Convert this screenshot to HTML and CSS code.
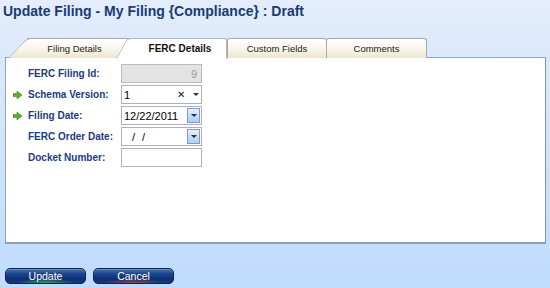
FILE: index.html
```html
<!DOCTYPE html>
<html lang="en">
<head>
    <meta charset="UTF-8">
    <title>Update Filing</title>
    <link rel="stylesheet" href="styles.css">
</head>
<body>
    <h1 class="page-title">Update Filing - My Filing {Compliance} : Draft</h1>

    <div class="tabs">
        <div class="tab tab-slant">Filing Details</div>
        <div class="tab tab-slant active">FERC Details</div>
        <div class="tab tab-custom">Custom Fields</div>
        <div class="tab tab-comments">Comments</div>
    </div>

    <div class="panel">
        <div class="form-row">
            <span class="marker"></span>
            <label class="field-label">FERC Filing Id:</label>
            <div class="field field-disabled">9</div>
        </div>
        <div class="form-row">
            <span class="marker">
                <svg width="9" height="8" viewBox="0 0 9 8"><path d="M0 2.5h4V0l5 4-5 4V5.5H0z" fill="#5cae2e" stroke="#3e8a1c" stroke-width="0.6"/></svg>
            </span>
            <label class="field-label">Schema Version:</label>
            <div class="field">
                <span class="field-value">1</span>
                <span class="clear-btn">&#x2715;</span>
                <span class="drop-arrow"></span>
            </div>
        </div>
        <div class="form-row">
            <span class="marker">
                <svg width="9" height="8" viewBox="0 0 9 8"><path d="M0 2.5h4V0l5 4-5 4V5.5H0z" fill="#5cae2e" stroke="#3e8a1c" stroke-width="0.6"/></svg>
            </span>
            <label class="field-label">Filing Date:</label>
            <div class="field">
                <span class="field-value">12/22/2011</span>
                <span class="date-btn"><span class="date-caret"></span></span>
            </div>
        </div>
        <div class="form-row">
            <span class="marker"></span>
            <label class="field-label">FERC Order Date:</label>
            <div class="field">
                <span class="field-value date-empty">/ /</span>
                <span class="date-btn"><span class="date-caret"></span></span>
            </div>
        </div>
        <div class="form-row">
            <span class="marker"></span>
            <label class="field-label">Docket Number:</label>
            <div class="field"></div>
        </div>
    </div>

    <div class="actions">
        <button class="action-btn btn-update">Update</button>
        <button class="action-btn btn-cancel">Cancel</button>
    </div>
</body>
</html>
```

FILE: styles.css
```css
* {
    margin: 0;
    padding: 0;
    box-sizing: border-box;
}

body {
    font-family: 'Liberation Sans', Arial, sans-serif;
    background: linear-gradient(180deg, #e3edfb 0%, #d3e4fc 45%, #c0dbfe 100%);
    height: 288px;
    width: 550px;
    overflow: hidden;
    padding: 0 4px 0 5px;
}

.page-title {
    font-size: 14px;
    font-weight: bold;
    color: #1b3b72;
    height: 38px;
    padding-top: 2px;
    margin-left: -2px;
    line-height: 18px;
}

/* tab strip */
.tabs {
    display: flex;
    height: 20px;
    padding-left: 22px;
    position: relative;
    z-index: 2;
}

.tab {
    position: relative;
    height: 20px;
    font-size: 9.5px;
    color: #222;
    line-height: 19px;
    text-align: center;
    background: linear-gradient(180deg, #ffffff 0%, #f6f3e8 60%, #ece6d0 100%);
    border: 1px solid #aaa99f;
    border-bottom: none;
    border-radius: 3px 3px 0 0;
}

.tab-slant {
    border-left: none;
    border-top-left-radius: 0;
}

.tab-slant::before {
    content: '';
    position: absolute;
    top: -1px;
    bottom: 0;
    left: -19px;
    width: 30px;
    background: linear-gradient(180deg, #ffffff 0%, #f6f3e8 60%, #ece6d0 100%);
    border-left: 1px solid #aaa99f;
    border-top: 1px solid #aaa99f;
    border-top-left-radius: 4px;
    transform: skewX(-44deg);
    transform-origin: bottom left;
    z-index: -1;
}

.tab-slant:first-child {
    width: 106px;
    padding-right: 10px;
    z-index: 1;
}

.tab-slant.active {
    width: 101px;
    margin-left: -7px;
    z-index: 3;
    background: #fff;
    font-size: 10px;
    font-weight: bold;
    color: #111;
    height: 21px;
    border-color: #a9b6c8;
    padding-left: 8px;
}

.tab-slant.active::before {
    background: #fff;
    border-color: #a9b6c8;
    left: -10px;
    width: 24px;
    transform: skewX(-28deg);
}

.tab-custom {
    width: 100px;
}

.tab-comments {
    width: 101px;
    margin-left: -1px;
}

/* panel */
.panel {
    height: 187px;
    width: 541px;
    background: #fff;
    border: 1px solid #8ea4c2;
    border-right-color: #7d93b4;
    border-bottom: 2px solid #8aa0c0;
    padding: 5px 0 0 6px;
    margin-top: -1px;
    position: relative;
    z-index: 1;
}

.form-row {
    display: flex;
    align-items: center;
    height: 21px;
}

.marker {
    width: 16px;
    display: flex;
    align-items: center;
    padding-left: 1px;
}

.field-label {
    width: 93px;
    white-space: nowrap;
    font-size: 10px;
    font-weight: bold;
    color: #1d3c7c;
}

.field {
    width: 81px;
    height: 19px;
    border: 1px solid #a8b1bd;
    background: #fff;
    display: flex;
    align-items: center;
    font-size: 11px;
    color: #000;
    padding-left: 2px;
}

.field-disabled {
    background: #e3e3e3;
    border-color: #b9bcc0;
    color: #9a9a9a;
    justify-content: flex-end;
    padding-right: 4px;
}

.field-value {
    flex: 1;
}

.date-empty {
    padding-left: 8px;
    letter-spacing: 2px;
}

.clear-btn {
    font-size: 10px;
    width: 14px;
    color: #222;
}

.drop-arrow {
    width: 10px;
    height: 8px;
    position: relative;
}

.drop-arrow::after {
    content: '';
    position: absolute;
    left: 2px;
    top: 2px;
    border-left: 3px solid transparent;
    border-right: 3px solid transparent;
    border-top: 3px solid #333;
}

.date-btn {
    width: 13px;
    height: 15px;
    margin-right: 1px;
    border: 1px solid #7d9bc9;
    background: linear-gradient(180deg, #e8f1fd 0%, #c6dbf6 55%, #b3cdf1 100%);
    display: flex;
    align-items: center;
    justify-content: center;
}

.date-caret {
    border-left: 3px solid transparent;
    border-right: 3px solid transparent;
    border-top: 3px solid #1c2f55;
}

/* buttons */
.actions {
    display: flex;
    gap: 7px;
    padding-top: 24px;
}

.action-btn {
    width: 81px;
    height: 16px;
    border-radius: 5px;
    border: 1px solid #0b2450;
    font-family: 'Liberation Sans', Arial, sans-serif;
    font-size: 10.5px;
    color: #fff;
    line-height: 14px;
    box-shadow: inset 0 1px 0 #6d8ec4;
    cursor: pointer;
}

.btn-update {
    background:
        radial-gradient(ellipse 30px 4px at 50% 100%, #3aa05a 0%, rgba(58, 160, 90, 0) 100%),
        linear-gradient(180deg, #4a6fae 0%, #1c4591 35%, #0e2f70 70%, #123a7c 100%);
}

.btn-cancel {
    background:
        radial-gradient(ellipse 32px 4px at 50% 100%, #8a4a4a 0%, rgba(138, 74, 74, 0) 100%),
        linear-gradient(180deg, #4a6fae 0%, #1c4591 35%, #0e2f70 70%, #123a7c 100%);
}
```
